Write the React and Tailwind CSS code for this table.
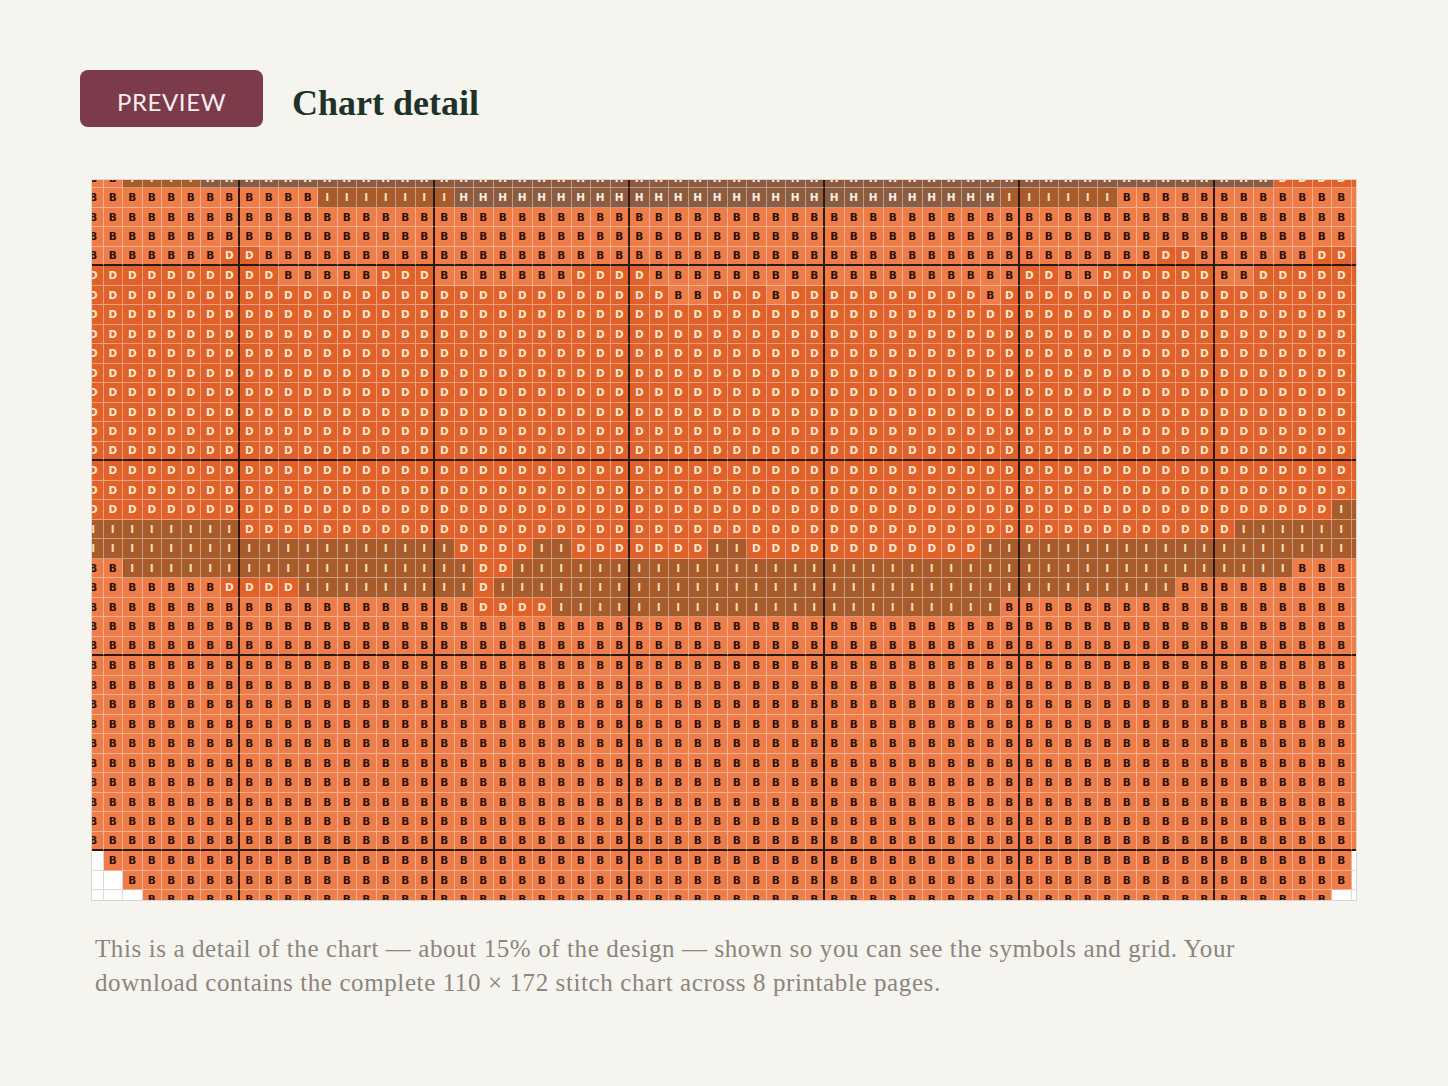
import React from "react";

// run-length rows of the chart crop: [symbol, count], 66 columns each
const ROWS = [
  [["B", 2], ["I", 4], ["H", 55], ["D", 5]],
  [["B", 12], ["I", 7], ["H", 28], ["I", 6], ["B", 13]],
  [["B", 66]],
  [["B", 66]],
  [["B", 7], ["D", 2], ["B", 46], ["D", 2], ["B", 6], ["D", 3]],
  [["D", 10], ["B", 5], ["D", 3], ["B", 7], ["D", 4], ["B", 19], ["D", 2], ["B", 2], ["D", 6], ["B", 2], ["D", 6]],
  [["D", 30], ["B", 2], ["D", 3], ["B", 1], ["D", 10], ["B", 1], ["D", 19]],
  ...Array.from({ length: 10 }, () => [["D", 66]]),
  [["D", 64], ["I", 2]],
  [["I", 8], ["D", 51], ["I", 7]],
  [["I", 19], ["D", 4], ["I", 2], ["D", 7], ["I", 2], ["D", 12], ["I", 20]],
  [["B", 2], ["I", 18], ["D", 2], ["I", 40], ["B", 4]],
  [["B", 7], ["D", 4], ["I", 9], ["D", 1], ["I", 35], ["B", 10]],
  [["B", 20], ["D", 4], ["I", 23], ["B", 19]],
  ...Array.from({ length: 12 }, () => [["B", 66]]),
  [["W", 1], ["B", 64], ["W", 1]],
  [["W", 2], ["B", 63], ["W", 1]],
  [["W", 3], ["B", 61], ["W", 2]],
];

const grid = ROWS.map((row) => row.flatMap(([s, n]) => Array(n).fill(s)));

const tone = {
  B: "bg-[#ef7d49] text-[#2a120b]",
  D: "bg-[#e0612a] text-[#fde6cc]",
  I: "bg-[#a85b2b] text-[#f6dcb8]",
  H: "bg-[#8c5b40] text-[#f7eee4]",
  W: "bg-white",
};

function Cell({ s, r, c }) {
  const right =
    c % 10 === 7
      ? "border-r-2 border-r-[#2b1911]"
      : s === "W"
      ? "border-r border-r-[#dedad3]"
      : "border-r border-r-white/40";
  const bottom =
    r % 10 === 4
      ? "border-b-2 border-b-[#2b1911]"
      : s === "W"
      ? "border-b border-b-[#dedad3]"
      : "border-b border-b-white/40";
  return (
    <div
      className={`flex items-center justify-center text-[10.5px] font-bold leading-none ${tone[s]} ${right} ${bottom}`}
    >
      {s !== "W" && s}
    </div>
  );
}

export default function App() {
  return (
    <div className="min-h-screen bg-[#f6f4ef] px-[80px] pt-[70px] pb-16">
      {/* Header */}
      <div className="flex h-[57px] items-center gap-[29px]">
        <span className="flex h-[57px] w-[183px] items-center justify-center rounded-lg bg-[#7b3b4a] pt-[6px] text-[24px] tracking-wide text-[#f8eeee] [font-family:Lato,'Liberation_Sans',sans-serif]">
          PREVIEW
        </span>
        <h2 className="h-[57px] pt-[5px] text-[36px] font-bold leading-[57px] text-[#1e3328] [font-family:'Liberation_Serif',serif]">
          Chart detail
        </h2>
      </div>

      {/* Chart crop */}
      <div className="ml-[11px] mt-[52px] w-[1266px] border border-[#dcd8d0]">
        <div className="h-[720px] w-[1264px] overflow-hidden">
          <div className="-ml-[8px] -mt-[11.5px] grid grid-cols-[repeat(66,19.5px)] auto-rows-[19.5px] [font-family:'DejaVu_Sans',Arial,sans-serif]">
            {grid.map((row, r) =>
              row.map((s, c) => <Cell key={`${r}-${c}`} s={s} r={r} c={c} />)
            )}
          </div>
        </div>
      </div>

      {/* Caption */}
      <p className="ml-[15px] mt-[31px] max-w-[1200px] text-[25px] leading-[34px] tracking-[0.6px] text-[#8b857d] [font-family:'Liberation_Serif',serif]">
        This is a detail of the chart — about 15% of the design — shown so you can see the symbols and grid. Your
        download contains the complete 110 × 172 stitch chart across 8 printable pages.
      </p>
    </div>
  );
}
